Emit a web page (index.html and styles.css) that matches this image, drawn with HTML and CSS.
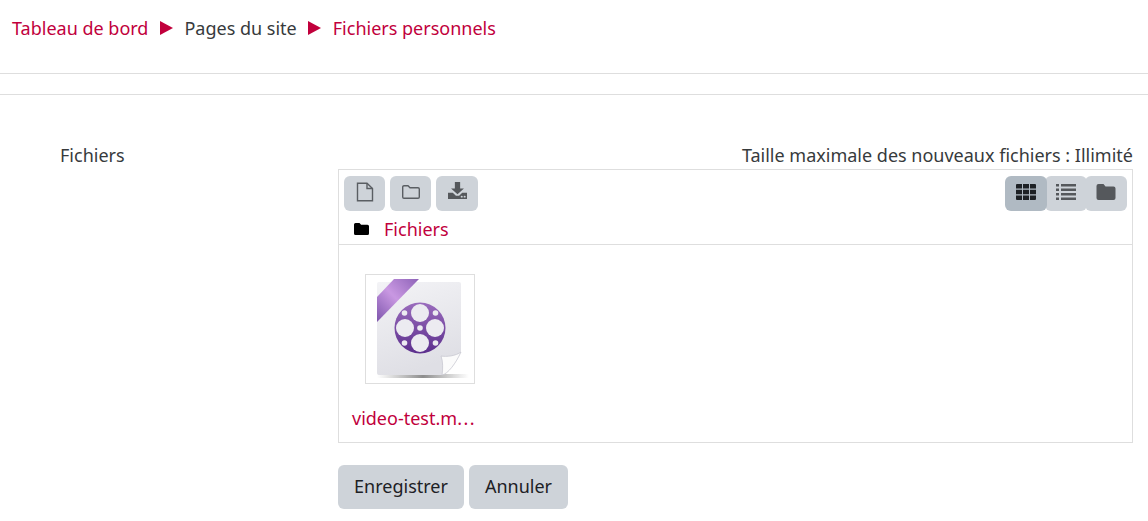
FILE: index.html
```html
<!DOCTYPE html>
<html lang="fr">
<head>
<meta charset="utf-8">
<title>Fichiers personnels</title>
<link rel="stylesheet" href="styles.css">
</head>
<body>
<nav class="crumbs">
  <a href="#">Tableau de bord</a>
  <span class="sep"></span>
  <span>Pages du site</span>
  <span class="sep"></span>
  <a href="#">Fichiers personnels</a>
</nav>
<div class="band"></div>
<form class="form">
  <div class="label">Fichiers</div>
  <div class="field">
    <div class="limit">Taille maximale des nouveaux fichiers : Illimité</div>
    <div class="fm">
      <div class="toolbar">
        <div class="tools">
          <button type="button" class="icon">
            <svg width="18" height="20" viewBox="0 0 18 20" fill="none" stroke="#5a5e63" stroke-width="1.4"><path d="M1.500 1.200h9.500l5.500 5.300v12.300h-15z"/><path d="M11 1.200v5.300h5.500"/></svg>
          </button>
          <button type="button" class="icon">
            <svg width="20" height="16" viewBox="0 0 20 16" fill="none" stroke="#5a5e63" stroke-width="1.4"><path d="M1.700 13V3a1.300 1.300 0 0 1 1.300-1.300h4l2 2h8a1.300 1.300 0 0 1 1.300 1.300v8a1.300 1.300 0 0 1-1.300 1.300H3A1.300 1.300 0 0 1 1.700 13z"/></svg>
          </button>
          <button type="button" class="icon">
            <svg class="dl" width="19" height="17" viewBox="1 1 18 18" preserveAspectRatio="none" fill="#55585c"><path d="M7.500 1h5v7h3.600L10 14 3.900 8h3.600z"/><path d="M1 12.500h4.500l3 3h3l3-3H19V19H1z"/><circle cx="14" cy="16.500" r="1" fill="#ced3d9"/><circle cx="16.800" cy="16.500" r="1" fill="#ced3d9"/></svg>
          </button>
        </div>
        <div class="views">
          <button type="button" class="view on">
            <svg width="20" height="16" viewBox="0 0 20 16" fill="#1d2125"><path d="M1 0h5v4.400H0V1a1 1 0 0 1 1-1zM7 0h6v4.400H7zM14 0h5a1 1 0 0 1 1 1v3.400h-6zM0 5.800h6v4.400H0zM7 5.800h6v4.400H7zM14 5.800h6v4.400h-6zM0 11.600h6V16H1a1 1 0 0 1-1-1zM7 11.600h6V16H7zM14 11.600h6V15a1 1 0 0 1-1 1h-5z"/></svg>
          </button>
          <button type="button" class="view">
            <svg width="20" height="16" viewBox="0 0 20 16" fill="#55585c"><path d="M0 0h3v2.400H0zM5 0h15v2.400H5zM0 4.500h3v2.400H0zM5 4.500h15v2.400H5zM0 9h3v2.400H0zM5 9h15v2.400H5zM0 13.500h3v2.400H0zM5 13.500h15v2.400H5z"/></svg>
          </button>
          <button type="button" class="view">
            <svg width="20" height="16" viewBox="0 0 19 16" fill="#55585c"><path d="M0 2a2 2 0 0 1 2-2h5l2 2.500h8a2 2 0 0 1 2 2V14a2 2 0 0 1-2 2H2a2 2 0 0 1-2-2z"/></svg>
          </button>
        </div>
      </div>
      <div class="path">
        <svg width="15" height="12" viewBox="0 0 15 12" fill="#000"><path d="M0 1.500A1.500 1.500 0 0 1 1.500 0h4l1.600 1.800h6.400A1.500 1.500 0 0 1 15 3.300v7.200a1.500 1.500 0 0 1-1.500 1.500h-12A1.500 1.500 0 0 1 0 10.500z"/></svg>
        <a href="#">Fichiers</a>
      </div>
      <div class="files">
        <div class="file">
          <div class="thumb">
            <svg class="mime" width="108" height="108" viewBox="0 0 108 108">
              <defs>
                <linearGradient id="page" x1="0" y1="0" x2="0.300" y2="1"><stop offset="0" stop-color="#f3f3f6"/><stop offset="1" stop-color="#dfdfe5"/></linearGradient>
                <linearGradient id="rib" x1="0" y1="1" x2="1" y2="0"><stop offset="0" stop-color="#7d55ac"/><stop offset="0.500" stop-color="#c998e2"/><stop offset="1" stop-color="#8e63b8"/></linearGradient>
                <linearGradient id="reel" x1="0" y1="0" x2="0" y2="1"><stop offset="0" stop-color="#9a6cbd"/><stop offset="1" stop-color="#5c2f8d"/></linearGradient>
                <linearGradient id="shade" x1="0" y1="0" x2="1" y2="0"><stop offset="0" stop-color="#777" stop-opacity="0"/><stop offset="0.500" stop-color="#666" stop-opacity="0.750"/><stop offset="1" stop-color="#777" stop-opacity="0"/></linearGradient>
              </defs>
              <rect x="11" y="99" width="92" height="4" fill="url(#shade)"/>
              <path d="M13 7h80a2 2 0 0 1 2 2v68L76 100H13a2 2 0 0 1-2-2V9a2 2 0 0 1 2-2z" fill="url(#page)"/>
              <path d="M11 22L28 4h25L11 47z" fill="url(#rib)"/>
              <path d="M95 77c-5 4-15 5-20 4 2 5 2 13 1 19 6-1 14-12 19-23z" fill="#fbfbfb" stroke="#c8c8d0" stroke-width="0.800"/>
              <circle cx="54" cy="53" r="25.500" fill="url(#reel)"/>
              <g fill="#ecebf1">
                <circle cx="54" cy="38" r="9"/>
                <circle cx="54" cy="68" r="9"/>
                <circle cx="39" cy="53" r="9"/>
                <circle cx="69" cy="53" r="9"/>
                <circle cx="54" cy="53" r="2.800"/>
                <circle cx="38.500" cy="38" r="2.800"/>
                <circle cx="69.500" cy="38" r="2.800"/>
                <circle cx="38.500" cy="68" r="2.800"/>
                <circle cx="69.500" cy="68" r="2.800"/>
              </g>
            </svg>
          </div>
          <a href="#" class="name">video-test.m<span class="dots">...</span></a>
        </div>
      </div>
    </div>
    <div class="actions">
      <button type="button" class="btn save">Enregistrer</button>
      <button type="button" class="btn cancel">Annuler</button>
    </div>
  </div>
</form>
</body>
</html>
```
FILE: styles.css
```css
* { box-sizing: border-box; }
html, body { margin: 0; padding: 0; }
body {
  width: 1148px;
  height: 521px;
  overflow: hidden;
  background: #fff;
  color: #373a3c;
  font-family: "Noto Sans", "Liberation Sans", sans-serif;
  font-size: 18px;
  line-height: 24px;
}
a { color: #c1003c; text-decoration: none; }
button { font: inherit; border: 0; margin: 0; padding: 0; cursor: pointer; }

.crumbs {
  display: flex;
  align-items: center;
  height: 74px;
  padding: 0 0 17px 12px;
  border-bottom: 1px solid #dedede;
}
.sep {
  width: 0;
  height: 0;
  margin: 0 11.500px;
  border-left: 13px solid #c1003c;
  border-top: 7px solid transparent;
  border-bottom: 7px solid transparent;
}
.band {
  height: 21px;
  border-bottom: 1px solid #dedede;
}
.form {
  display: flex;
  padding: 48px 15px 0 60px;
}
.label { width: 278px; flex: none; line-height: 24px; }
.field { flex: 1; min-width: 0; }
.limit { height: 26px; text-align: right; line-height: 24px; }
.fm {
  height: 274px;
  border: 1px solid #dedede;
  display: flex;
  flex-direction: column;
}
.toolbar {
  display: flex;
  justify-content: space-between;
  padding: 6px 5px 0;
}
.tools { display: flex; gap: 5px; }
.icon {
  display: flex;
  align-items: center;
  justify-content: center;
  width: 41px;
  height: 35px;
  padding-bottom: 4px;
  background: #ced3d9;
  border-radius: 6px;
}
.icon:last-child { width: 42px; }
.dl { margin-bottom: 3px; }
.views { display: flex; }
.view {
  display: flex;
  align-items: center;
  justify-content: center;
  width: 42px;
  height: 35px;
  padding-bottom: 4px;
  margin-left: -2px;
  background: #ced3d9;
  border-radius: 6px;
}
.view.on { background: #b0bac3; position: relative; z-index: 1; }
.path {
  display: flex;
  align-items: center;
  gap: 15px;
  height: 34px;
  padding: 3px 0 0 15px;
  border-bottom: 1px solid #dedede;
}
.files { padding: 29px 0 0 12px; }
.file { width: 125px; }
.thumb {
  display: flex;
  align-items: center;
  justify-content: center;
  width: 110px;
  height: 110px;
  margin-left: 14px;
  border: 1px solid #dedede;
}
.mime { filter: blur(0.4px); }
.name { display: block; margin-top: 22px; margin-left: 1px; white-space: nowrap; }
.dots { letter-spacing: 1.500px; }
.actions { display: flex; gap: 5px; margin-top: 22px; }
.btn {
  height: 44px;
  padding-bottom: 2px;
  background: #ced3d9;
  border-radius: 6px;
  color: #1d2125;
}
.save { width: 126px; }
.cancel { width: 99px; }
```
